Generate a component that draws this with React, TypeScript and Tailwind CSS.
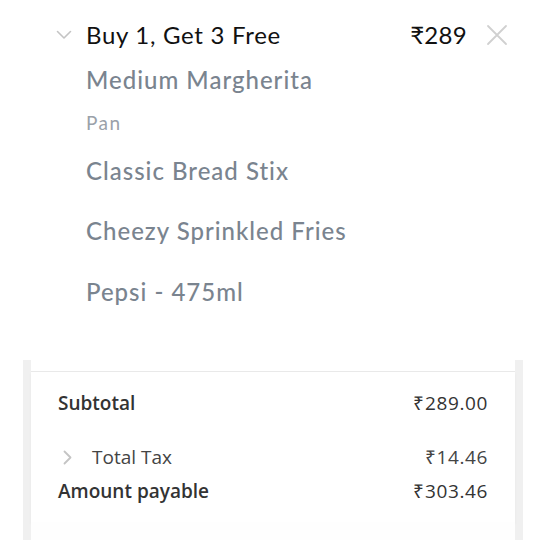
import React from "react";

const items = [
  { name: "Classic Bread Stix", mt: "mt-[21px]" },
  { name: "Cheezy Sprinkled Fries", mt: "mt-[30px]" },
  { name: "Pepsi - 475ml", mt: "mt-[31px]" },
];

function ChevronDown() {
  return (
    <svg width="16" height="10" viewBox="0 0 16 10" fill="none">
      <path d="M1.5 1.5 L8 8 L14.5 1.5" stroke="#c4c4c4" strokeWidth="1.6" strokeLinecap="round" strokeLinejoin="round" />
    </svg>
  );
}

function ChevronRight() {
  return (
    <svg width="9" height="15" viewBox="0 0 9 15" fill="none">
      <path d="M1.5 1.5 L7.5 7.5 L1.5 13.5" stroke="#c4c4c4" strokeWidth="1.8" strokeLinecap="round" strokeLinejoin="round" />
    </svg>
  );
}

function CloseIcon() {
  return (
    <svg width="22" height="22" viewBox="0 0 22 22" fill="none">
      <path d="M2 2 L20 20 M20 2 L2 20" stroke="#d0d0d0" strokeWidth="1.8" strokeLinecap="round" />
    </svg>
  );
}

export default function App() {
  return (
    <div className="w-[543px] h-[551px] bg-white overflow-hidden">
      {/* deal summary */}
      <div className="pt-[21px] pl-[56px] pr-[35px] font-['Lato',sans-serif]">
        <div className="flex items-center h-7">
          <div className="w-[30px] flex items-center">
            <ChevronDown />
          </div>
          <div className="flex-1 text-[24px] tracking-[0.7px] text-[#111] leading-7">Buy 1, Get 3 Free</div>
          <div className="text-[24px] tracking-[0.3px] text-[#111] leading-7 mr-[19px]">₹289</div>
          <CloseIcon />
        </div>
        <div className="pl-[30px]">
          <div className="mt-4 text-[24px] tracking-[1px] font-medium leading-[30px] text-[#7a848f]">Medium Margherita</div>
          <div className="mt-4 text-[19px] tracking-[1.5px] leading-6 text-[#9aa1a9]">Pan</div>
          {items.map((it) => (
            <div key={it.name} className={`${it.mt} text-[24px] tracking-[1px] font-medium leading-[30px] text-[#7a848f]`}>
              {it.name}
            </div>
          ))}
        </div>
      </div>

      {/* bill */}
      <div className="mt-[53px] ml-[23px] w-[500px] h-[180px] bg-[#f0f0f0] px-2 font-['Open_Sans',sans-serif]">
        <div className="bg-white h-full flex flex-col">
          <div className="h-[12px] border-b border-[#e9e9e9]"></div>
          <div className="px-[27px] pt-[19px] pb-[19px] shadow-[0_2px_3px_rgba(0,0,0,0.04)]">
            <div className="flex justify-between text-[19px] leading-6 font-semibold text-[#333]">
              <span>Subtotal</span>
              <span className="font-normal tracking-[0.6px]">₹289.00</span>
            </div>
            <div className="mt-[30px] flex items-center justify-between text-[19px] leading-6 text-[#444]">
              <div className="flex items-center">
                <span className="ml-[5px] w-[29px] flex items-center">
                  <ChevronRight />
                </span>
                <span>Total Tax</span>
              </div>
              <span className="tracking-[0.6px]">₹14.46</span>
            </div>
            <div className="mt-[10px] flex justify-between text-[19px] leading-6 font-semibold text-[#333]">
              <span>Amount payable</span>
              <span className="font-normal tracking-[0.6px]">₹303.46</span>
            </div>
          </div>
          <div className="flex-1 bg-[#fefefe]"></div>
        </div>
      </div>
    </div>
  );
}
